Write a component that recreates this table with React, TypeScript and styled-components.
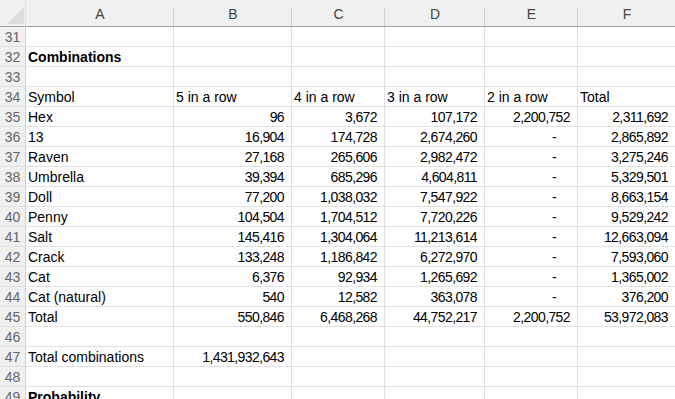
import React from 'react';
import styled, { createGlobalStyle } from 'styled-components';

const GlobalStyle = createGlobalStyle`
  html, body {
    margin: 0;
    padding: 0;
    background: #ffffff;
    overflow: hidden;
  }
  body {
    font-family: "Liberation Sans", Arial, sans-serif;
  }
`;

const colors = {
  grid: '#e1e1e1',
  headerBg: '#f0f0f0',
  headerLine: '#9f9f9f',
  headerText: '#444444',
  rowNumber: '#666666',
  text: '#000000',
};

const Sheet = styled.div`
  display: grid;
  grid-template-columns: 26px 148px 118px 93px 100px 93px 98px;
  grid-template-rows: 27px;
  grid-auto-rows: 20px;
  width: 676px;
`;

const Corner = styled.div`
  background: ${colors.headerBg};
  border-bottom: 1px solid ${colors.headerLine};
  border-right: 1px solid ${colors.grid};
  box-sizing: border-box;
  display: flex;
  align-items: flex-end;
  justify-content: flex-end;
  padding: 0 1px 2px 0;
`;

const ColumnHeader = styled.div<{ $last?: boolean }>`
  position: relative;
  background: ${colors.headerBg};
  border-bottom: 1px solid ${colors.headerLine};
  box-sizing: border-box;
  display: flex;
  align-items: center;
  justify-content: center;
  padding-top: 2px;
  font-size: 14px;
  color: ${colors.headerText};

  &::after {
    content: '';
    display: ${(p) => (p.$last ? 'none' : 'block')};
    position: absolute;
    right: 0;
    top: 8px;
    bottom: 0;
    width: 1px;
    background: #d4d4d4;
  }
`;

const RowNumber = styled.div`
  background: ${colors.headerBg};
  border-bottom: 1px solid ${colors.grid};
  border-right: 1px solid #d0d0d0;
  box-sizing: border-box;
  display: flex;
  align-items: center;
  justify-content: center;
  font-size: 14px;
  color: ${colors.rowNumber};
  padding-top: 1px;
`;

const Cell = styled.div<{ $align?: 'left' | 'right'; $bold?: boolean; $dash?: boolean }>`
  border-bottom: 1px solid ${colors.grid};
  border-right: 1px solid ${colors.grid};
  box-sizing: border-box;
  display: flex;
  align-items: center;
  justify-content: ${(p) => (p.$align === 'right' ? 'flex-end' : 'flex-start')};
  padding: 1px ${(p) => (p.$dash ? '21px' : p.$align === 'right' ? '7px' : '0')} 0
    ${(p) => (p.$align === 'right' ? '0' : '2px')};
  font-size: 14px;
  font-weight: ${(p) => (p.$bold ? 700 : 400)};
  letter-spacing: ${(p) => (p.$align === 'right' ? '-0.6px' : '0')};
  color: ${colors.text};
  white-space: nowrap;
  overflow: visible;
`;

const columns = ['A', 'B', 'C', 'D', 'E', 'F'];

type Row = { n: number; cells: (string | null)[]; bold?: boolean; headerRow?: boolean };

const data: [string, string, string, string, string, string][] = [
  ['Hex', '96', '3,672', '107,172', '2,200,752', '2,311,692'],
  ['13', '16,904', '174,728', '2,674,260', '-', '2,865,892'],
  ['Raven', '27,168', '265,606', '2,982,472', '-', '3,275,246'],
  ['Umbrella', '39,394', '685,296', '4,604,811', '-', '5,329,501'],
  ['Doll', '77,200', '1,038,032', '7,547,922', '-', '8,663,154'],
  ['Penny', '104,504', '1,704,512', '7,720,226', '-', '9,529,242'],
  ['Salt', '145,416', '1,304,064', '11,213,614', '-', '12,663,094'],
  ['Crack', '133,248', '1,186,842', '6,272,970', '-', '7,593,060'],
  ['Cat', '6,376', '92,934', '1,265,692', '-', '1,365,002'],
  ['Cat (natural)', '540', '12,582', '363,078', '-', '376,200'],
  ['Total', '550,846', '6,468,268', '44,752,217', '2,200,752', '53,972,083'],
];

const rows: Row[] = [
  { n: 31, cells: [null, null, null, null, null, null] },
  { n: 32, cells: ['Combinations', null, null, null, null, null], bold: true },
  { n: 33, cells: [null, null, null, null, null, null] },
  { n: 34, cells: ['Symbol', '5 in a row', '4 in a row', '3 in a row', '2 in a row', 'Total'], headerRow: true },
  ...data.map((d, i) => ({ n: 35 + i, cells: d })),
  { n: 46, cells: [null, null, null, null, null, null] },
  { n: 47, cells: ['Total combinations', '1,431,932,643', null, null, null, null] },
  { n: 48, cells: [null, null, null, null, null, null] },
  { n: 49, cells: ['Probability', null, null, null, null, null], bold: true },
];

const CornerMark = () => (
  <svg width="17" height="17" viewBox="0 0 17 17">
    <polygon points="17,0 17,17 0,17" fill="#dcdcdc" />
  </svg>
);

const App: React.FC = () => {
  return (
    <>
      <GlobalStyle />
      <Sheet>
        <Corner>
          <CornerMark />
        </Corner>
        {columns.map((c, i) => (
          <ColumnHeader key={c} $last={i === columns.length - 1}>
            {c}
          </ColumnHeader>
        ))}
        {rows.map((row) => (
          <React.Fragment key={row.n}>
            <RowNumber>{row.n}</RowNumber>
            {row.cells.map((value, i) => {
              const numeric = i > 0 && !row.headerRow && value !== null;
              return (
                <Cell
                  key={i}
                  $align={numeric ? 'right' : 'left'}
                  $bold={row.bold}
                  $dash={value === '-'}
                >
                  {value}
                </Cell>
              );
            })}
          </React.Fragment>
        ))}
      </Sheet>
    </>
  );
};

export default App;
